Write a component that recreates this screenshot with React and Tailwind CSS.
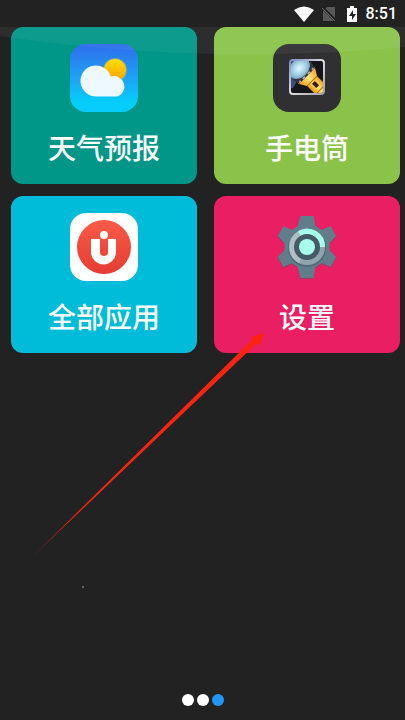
import React from "react";

const WeatherIcon = () => (
  <svg viewBox="0 0 68 68" className="w-17 h-17" aria-hidden="true">
    <defs>
      <linearGradient id="sky" x1="0" y1="0" x2="0" y2="1">
        <stop offset="0" stopColor="#2f6cec" />
        <stop offset="0.5" stopColor="#1fa2f4" />
        <stop offset="0.85" stopColor="#06cdfb" />
        <stop offset="1" stopColor="#06cdfb" />
      </linearGradient>
      <linearGradient id="sun" x1="0" y1="0" x2="0" y2="1">
        <stop offset="0" stopColor="#ffe000" />
        <stop offset="1" stopColor="#ffa000" />
      </linearGradient>
    </defs>
    <rect width="68" height="68" rx="16" fill="url(#sky)" />
    <circle cx="45" cy="26" r="12" fill="#d9c95a" opacity="0.4" />
    <circle cx="45" cy="26" r="11" fill="url(#sun)" />
    <path
      d="M26 52.500a15.500 15.500 0 1 1 14.800-20A10 10 0 1 1 47 52.500z"
      fill="#eef9ff"
    />
  </svg>
);

const FlashlightIcon = () => (
  <svg viewBox="0 0 68 68" className="w-17 h-17" aria-hidden="true">
    <defs>
      <linearGradient id="frame" x1="0" y1="0" x2="1" y2="1">
        <stop offset="0" stopColor="#7f8cc8" />
        <stop offset="0.5" stopColor="#dcdce0" />
        <stop offset="1" stopColor="#a39ca5" />
      </linearGradient>
      <radialGradient id="lens">
        <stop offset="0" stopColor="#e6f8ff" />
        <stop offset="0.6" stopColor="#a5d3e4" />
        <stop offset="1" stopColor="#7ba6c4" />
      </radialGradient>
      <linearGradient id="brass" x1="0" y1="0" x2="0" y2="1">
        <stop offset="0" stopColor="#f0a01c" />
        <stop offset="0.5" stopColor="#ffe27a" />
        <stop offset="1" stopColor="#e9960f" />
      </linearGradient>
      <clipPath id="screen">
        <rect x="18" y="17" width="32" height="32" rx="2" />
      </clipPath>
    </defs>
    <rect width="68" height="68" rx="16" fill="#303032" />
    <rect x="17" y="16" width="34" height="34" rx="3" fill="#17151c" stroke="url(#frame)" strokeWidth="2" />
    <g clipPath="url(#screen)">
      <path d="M18 17h18L20 44h-2z" fill="#55669f" opacity="0.7" />
      <g transform="translate(27 25) rotate(45)">
        <path d="M15 -7H34V7H15z" fill="url(#brass)" />
        <path d="M9 -12L17 -7V7L9 12z" fill="url(#brass)" />
        <path d="M2 -13L10 -11V11L2 13z" fill="#34343c" />
        <path d="M9 -10V-8M9 -5V-2M9 2V5M9 8V10" stroke="#a7a9b2" strokeWidth="2" />
        <path d="M19 0h6" stroke="#2b2010" strokeWidth="4" />
        <path d="M17 -7V7M29 -7V7" stroke="#a86c12" strokeWidth="1" />
        <ellipse cx="-1" cy="0" rx="9" ry="12" fill="url(#lens)" />
      </g>
    </g>
  </svg>
);

const AppsIcon = () => (
  <svg viewBox="0 0 68 68" className="w-17 h-17" aria-hidden="true">
    <defs>
      <linearGradient id="coral" x1="0" y1="0" x2="0" y2="1">
        <stop offset="0" stopColor="#fb5b48" />
        <stop offset="1" stopColor="#e53c33" />
      </linearGradient>
    </defs>
    <rect width="68" height="68" rx="16" fill="#fff" />
    <circle cx="34" cy="34" r="27" fill="url(#coral)" />
    <circle cx="34" cy="22" r="4" fill="#fff" />
    <path
      d="M21 26h9v13a4 4 0 0 0 8 0V26h8v13a12 12 0 0 1-25 0z"
      fill="#fff"
    />
  </svg>
);

const gearPath =
  "M27 3h14l2 10 7 4 9-4 6 10-7 7v7l7 7-6 10-9-4-7 4-2 11H27l-3-11-6-4-9 4-6-10 7-7v-7l-7-7 6-10 9 4 6-4z";

const SettingsIcon = () => (
  <svg viewBox="0 0 68 68" className="w-17 h-17" aria-hidden="true">
    <g transform="translate(2 0) scale(0.94 1)">
      <path d={gearPath} fill="#4c5c64" opacity="0.6" transform="translate(0 1)" />
      <path d={gearPath} fill="#607d8b" />
    </g>
    <circle cx="34" cy="35" r="19" fill="#526a76" />
    <circle cx="34" cy="34" r="18" fill="#90a4ae" />
    <path d="M34 34L26 50A18 18 0 0 1 26 18z" fill="#b0bec5" />
    <path d="M34 34L25 18A18 18 0 0 1 52 34z" fill="#a7ffeb" />
    <circle cx="34" cy="34" r="13" fill="#455a64" />
    <circle cx="34" cy="34" r="8" fill="#a7ffeb" />
  </svg>
);

const tiles = [
  { label: "天气预报", color: "bg-[#009688]", Icon: WeatherIcon },
  { label: "手电筒", color: "bg-[#8bc34a]", Icon: FlashlightIcon },
  { label: "全部应用", color: "bg-[#00bcd8]", Icon: AppsIcon },
  { label: "设置", color: "bg-[#e91e63]", Icon: SettingsIcon },
];

const StatusBar = () => (
  <header className="flex h-[27px] items-center justify-end pr-2 text-white">
    <svg viewBox="0 0 20 16" className="h-4 w-5" aria-label="Wi-Fi">
      <path d="M0 4Q10-3 20 4L10 16z" fill="#fff" />
    </svg>
    <svg viewBox="0 0 14 16" className="ml-2 h-4 w-[14px]" aria-label="No SIM">
      <path d="M5 1h8v14H1V5z" fill="#585858" />
      <path d="M0 1l14 14" stroke="#222" strokeWidth="3" />
      <path d="M0 2l13 13" stroke="#686868" strokeWidth="1" />
    </svg>
    <svg viewBox="0 0 12 18" className="ml-[10px] h-[18px] w-3" aria-label="Charging">
      <path d="M4 1h4v2h3v14H1V3h3z" fill="#fff" />
      <path d="M7 5L3 11h3v4l4-6H7z" fill="#222" />
    </svg>
    <time className="ml-2 text-base font-medium">8:51</time>
  </header>
);

export default function App() {
  return (
    <div className="relative flex min-h-screen flex-col bg-[#222222] font-['Roboto','Noto_Sans_CJK_SC',sans-serif]">
      <StatusBar />

      <main className="grid grid-cols-2 gap-x-[17px] gap-y-3 pr-[5px] pl-[11px]">
        {tiles.map(({ label, color, Icon }) => (
          <button
            key={label}
            type="button"
            className={`flex h-[157px] flex-col items-center rounded-xl pt-[17px] text-white ${color}`}
          >
            <Icon />
            <span className="mt-5 text-[28px] leading-9 font-medium">{label}</span>
          </button>
        ))}
      </main>

      <nav className="mt-auto flex justify-center gap-[3px] pb-[14px]" aria-label="Pages">
        <button type="button" aria-label="Page 1" className="h-3 w-3 rounded-full bg-white" />
        <button type="button" aria-label="Page 2" className="h-3 w-3 rounded-full bg-white" />
        <button type="button" aria-label="Page 3" className="h-3 w-3 rounded-full bg-[#2196f3]" />
      </nav>

      {/* gloss and pointer lie over the tiles */}
      <svg
        viewBox="0 0 405 720"
        className="pointer-events-none absolute top-0 left-0 w-full"
        aria-hidden="true"
      >
        <defs>
          <linearGradient id="tail" x1="0" y1="1" x2="1" y2="0">
            <stop offset="0" stopColor="#fb2412" stopOpacity="0.5" />
            <stop offset="0.2" stopColor="#fb2412" />
            <stop offset="1" stopColor="#fb2412" />
          </linearGradient>
        </defs>
        <path d="M0 27H405V47Q205 66 0 36z" fill="#fff" opacity="0.05" />
        <path d="M31 558L252 340L251 337L264 333L260 345L256 344z" fill="url(#tail)" />
        <circle cx="83" cy="587" r="1" fill="#777" />
      </svg>
    </div>
  );
}
